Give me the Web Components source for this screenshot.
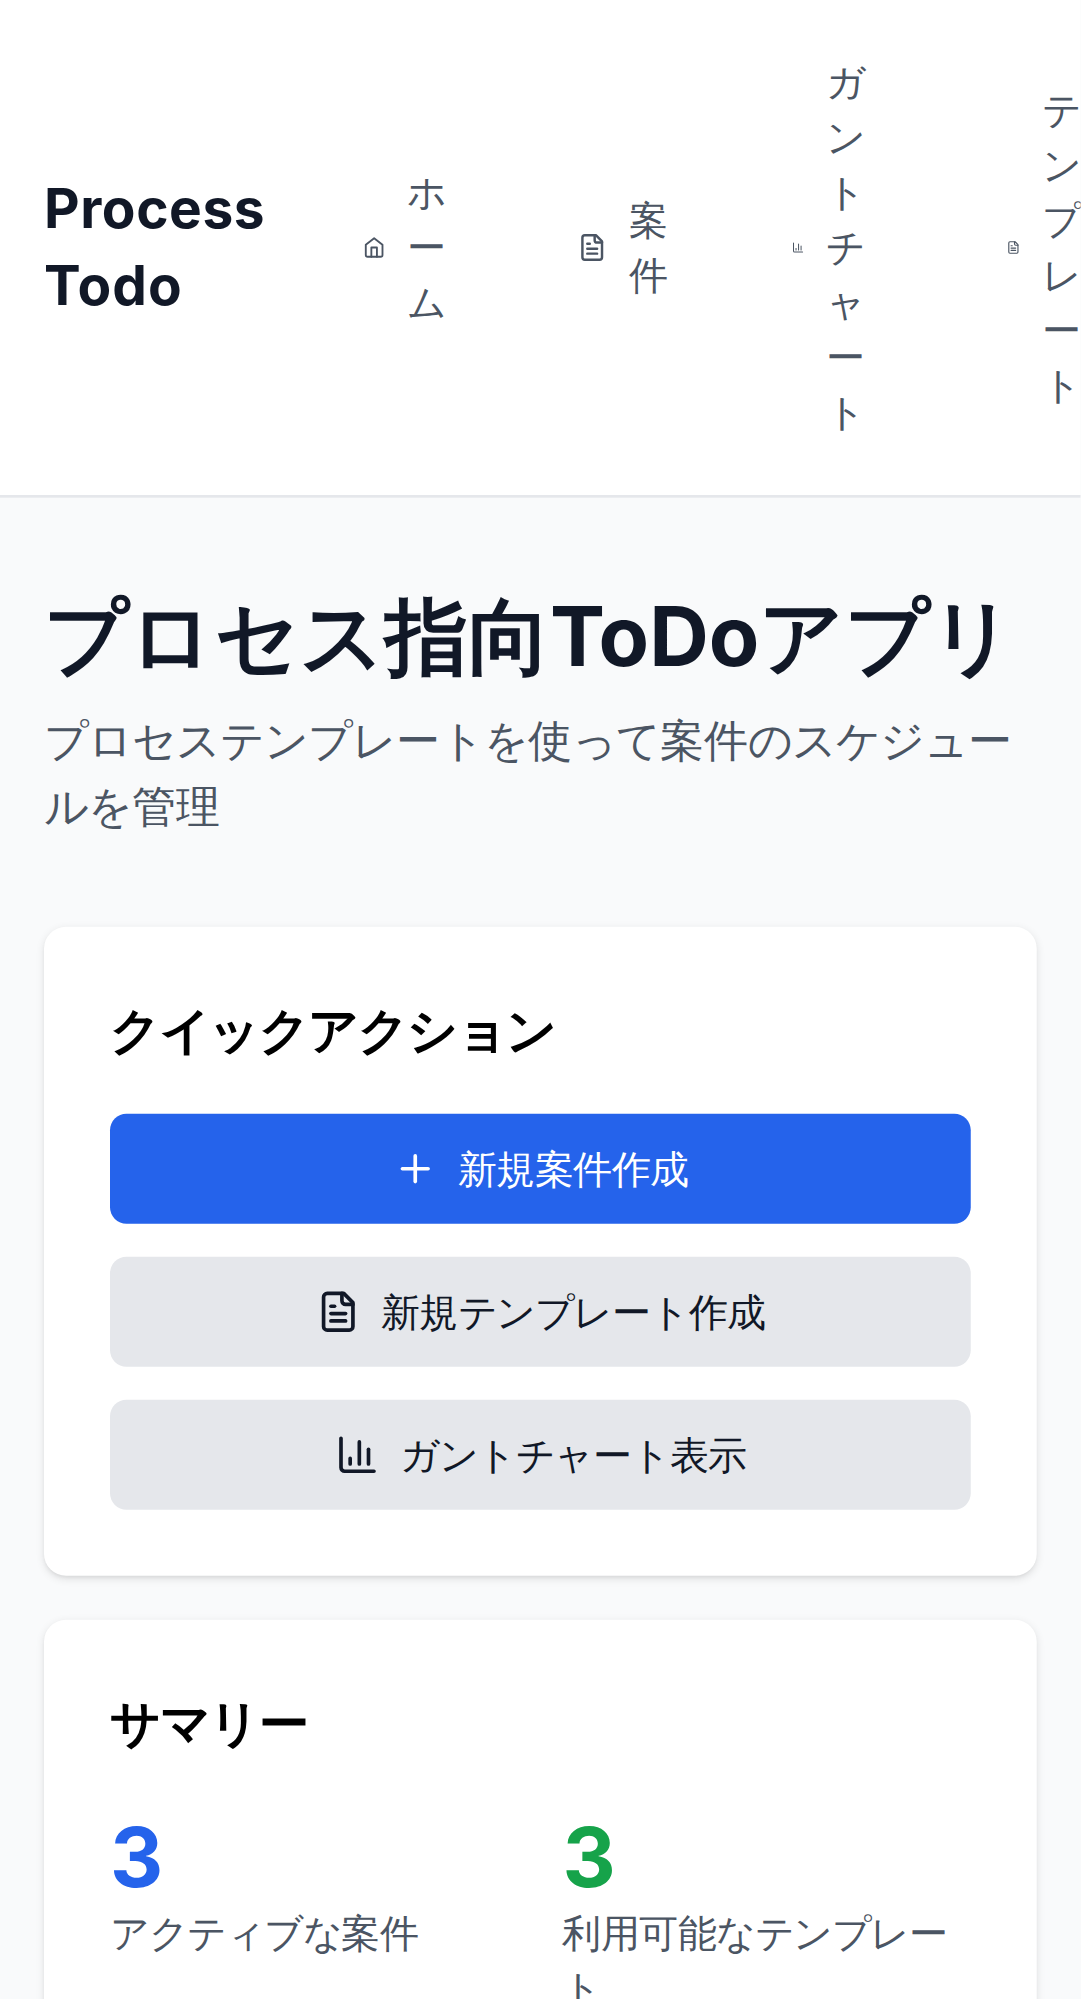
<!DOCTYPE html>
<html lang="ja">
<head>
<meta charset="utf-8">
<title>Process Todo</title>
<style>
html { font-size: 16px; overflow: hidden; background: #f9fafb; }
body { margin: 0; width: 393.1px; height: 726.9px; transform: scale(2.75); transform-origin: 0 0; background: #f9fafb; color: #000; font-family: Inter, sans-serif; line-height: 1.5; overflow: hidden; }
</style>
</head>
<body>
<todo-header>
  <nav-link icon="home" size="8.1">ホーム</nav-link>
  <nav-link icon="file" size="10.7">案件</nav-link>
  <nav-link icon="chart" size="4.4">ガントチャート</nav-link>
  <nav-link icon="file" size="5">テンプレート</nav-link>
</todo-header>
<page-main>
  <page-title><span>プロセス指向ToDoアプリ</span><span slot="lead">プロセステンプレートを使って案件のスケジュールを管理</span></page-title>
  <info-card heading="クイックアクション">
    <action-list>
      <action-button icon="plus" primary>新規案件作成</action-button>
      <action-button icon="file">新規テンプレート作成</action-button>
      <action-button icon="chart">ガントチャート表示</action-button>
    </action-list>
  </info-card>
  <info-card heading="サマリー">
    <stat-grid>
      <stat-item value="3" style="--tone: #2563eb">アクティブな案件</stat-item>
      <stat-item value="3" style="--tone: #16a34a">利用可能なテンプレート</stat-item>
    </stat-grid>
  </info-card>
</page-main>
<script>
const ICONS = {
  home: '<path d="m3 9 9-7 9 7v11a2 2 0 0 1-2 2H5a2 2 0 0 1-2-2z"/><path d="M9 22V12h6v10"/>',
  file: '<path d="M15 2H6a2 2 0 0 0-2 2v16a2 2 0 0 0 2 2h12a2 2 0 0 0 2-2V7Z"/><path d="M14 2v4a2 2 0 0 0 2 2h4"/><path d="M10 9H8"/><path d="M16 13H8"/><path d="M16 17H8"/>',
  chart: '<path d="M3 3v16a2 2 0 0 0 2 2h16"/><path d="M18 17V9"/><path d="M13 17V5"/><path d="M8 17v-3"/>',
  plus: '<path d="M5 12h14"/><path d="M12 5v14"/>'
};
const define = (name, render) => customElements.define(name, class extends HTMLElement {
  constructor() { super(); this.attachShadow({ mode: 'open' }); }
  connectedCallback() { this.shadowRoot.innerHTML = render(this); }
});
define('line-icon', el => `<style>
  :host { display: block; flex: none; }
  svg { display: block; width: 100%; height: 100%; fill: none; stroke: currentColor; stroke-width: 2; stroke-linecap: round; stroke-linejoin: round; }
</style><svg viewBox="${el.getAttribute('box') || '0 0 24 24'}" aria-hidden="true">${ICONS[el.getAttribute('name')]}</svg>`);
define('todo-header', () => `<style>
  :host { display: flex; align-items: center; box-sizing: border-box; width: 100%; overflow: hidden; padding: 1.25rem 0 1.25rem 1rem; background: #fff; border-bottom: 1px solid #e5e7eb; }
  h1 { flex: none; width: 116px; margin: 0; padding-right: 24px; box-sizing: border-box; font-size: 1.25rem; line-height: 1.75rem; font-weight: 700; letter-spacing: .21px; color: #111827; }
  h1 span { letter-spacing: .4px; }
  nav { display: grid; grid-template-columns: repeat(4, 78px); align-items: center; flex: none; }
</style><h1>Process <span>Todo</span></h1><nav><slot></slot></nav>`);
// The icon keeps a whole-pixel 12px box; its viewBox shrinks the drawing to the requested size.
define('nav-link', el => {
  const size = Number(el.getAttribute('size'));
  const units = 24 * 12 / size;
  return `<style>
  :host { display: flex; align-items: center; color: #4b5563; font-size: .875rem; line-height: 1.25rem; }
  line-icon { width: 12px; height: 12px; margin-right: ${size - 4}px; }
  span { width: 1em; word-break: break-all; line-break: anywhere; }
</style><line-icon name="${el.getAttribute('icon')}" box="0 ${12 - units / 2} ${units} ${units}"></line-icon><span><slot></slot></span>`;
});
define('page-main', () => `<style>
  :host { display: flex; flex-direction: column; gap: 1rem; width: 361px; padding: 2rem 1rem 0; }
</style><slot></slot>`);
define('page-title', () => `<style>
  :host { display: block; margin-bottom: 1rem; }
  h1 { margin: 0; font-size: 1.875rem; line-height: 2.25rem; font-weight: 700; color: #111827; white-space: nowrap; }
  p { margin: .5rem 0 0; font-size: 1rem; line-height: 1.5rem; color: #4b5563; }
</style><h1><slot></slot></h1><p><slot name="lead"></slot></p>`);
define('info-card', el => `<style>
  :host { display: block; padding: 1.5rem; border-radius: .5rem; background: #fff; box-shadow: 0 1px 3px rgba(0,0,0,.1), 0 1px 2px -1px rgba(0,0,0,.1); }
  h2 { margin: 0 0 1rem; font-size: 1.125rem; line-height: 1.75rem; font-weight: 600; }
</style><h2>${el.getAttribute('heading')}</h2><slot></slot>`);
define('action-list', () => `<style>
  :host { display: flex; flex-direction: column; gap: .75rem; }
</style><slot></slot>`);
define('action-button', el => `<style>
  :host { display: flex; }
  button { display: flex; flex: 1; align-items: center; justify-content: center; gap: .5rem; height: 2.5rem; padding: 0 1rem; border: 0; border-radius: .375rem; background: #e5e7eb; color: #111827; font: inherit; font-size: .875rem; line-height: 1.25rem; }
  :host([primary]) button { background: #2563eb; color: #fff; }
  line-icon { width: 1rem; height: 1rem; }
</style><button><line-icon name="${el.getAttribute('icon')}"></line-icon><span><slot></slot></span></button>`);
define('stat-grid', () => `<style>
  :host { display: grid; grid-template-columns: 1fr 1fr; gap: 1rem; }
</style><slot></slot>`);
define('stat-item', el => `<style>
  :host { display: block; min-width: 0; }
  .value { font-size: 1.875rem; line-height: 2.25rem; font-weight: 700; color: var(--tone); }
  .label { font-size: .875rem; line-height: 1.25rem; color: #4b5563; }
</style><div class="value">${el.getAttribute('value')}</div><div class="label"><slot></slot></div>`);
</script>
</body>
</html>
